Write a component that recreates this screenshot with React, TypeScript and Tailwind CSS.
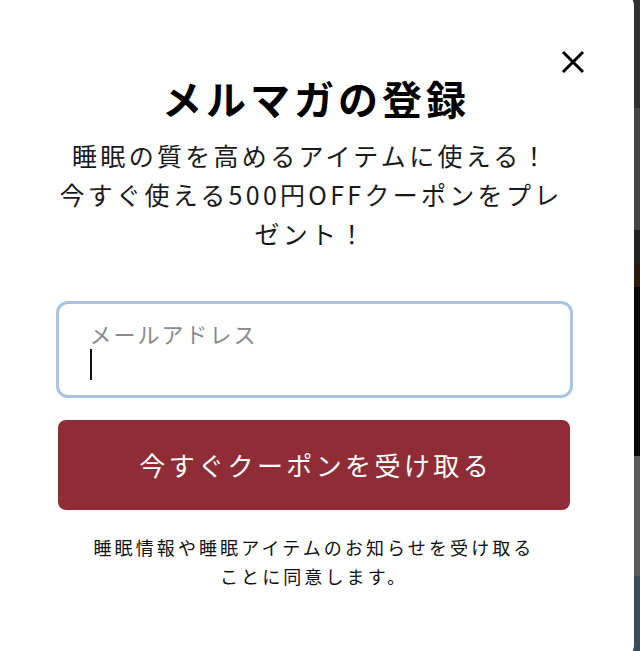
import React from "react";

const bands: { h: number; c: string }[] = [
  { h: 108, c: "bg-[#303030]" },
  { h: 122, c: "bg-[#444444]" },
  { h: 34, c: "bg-[#222222]" },
  { h: 23, c: "bg-[#2a1a10]" },
  { h: 169, c: "bg-[#080808]" },
  { h: 120, c: "bg-[#5b5b5b]" },
  { h: 75, c: "bg-[#3b4a55]" },
];

export default function App() {
  return (
    <div
      className="relative w-[640px] h-[651px] overflow-hidden"
      style={{ fontFamily: '"Noto Sans CJK JP", "Noto Sans", sans-serif' }}
    >
      {/* background photo behind the modal */}
      <div className="flex flex-col w-full h-full">
        {bands.map((b, i) => (
          <div key={i} className={`w-full ${b.c}`} style={{ height: b.h }} />
        ))}
      </div>

      {/* modal panel */}
      <div className="absolute left-0 top-[-8px] bottom-[-8px] w-[634px] bg-white rounded-r-[14px]">
        <button className="absolute left-[561px] top-[58px] w-[24px] h-[24px] flex items-center justify-center">
          <svg width="24" height="24" viewBox="0 0 24 24">
            <path d="M2 2 L22 22 M22 2 L2 22" stroke="#000" strokeWidth="3" strokeLinecap="butt" />
          </svg>
        </button>

        <div className="flex flex-col items-center pl-[58px] pr-[64px] pt-[82px]">
          <h2 className="text-[40px] leading-[48px] font-bold tracking-[0.1em] text-black whitespace-nowrap pl-[0.1em]">
            メルマガの登録
          </h2>
          <p className="mt-[14px] mr-[6px] text-[25px] leading-[39px] tracking-[3.3px] text-[#1a1a1a] text-center whitespace-nowrap">
            睡眠の質を高めるアイテムに使える！
            <br />
            今すぐ使える500円OFFクーポンをプレ
            <br />
            ゼント！
          </p>

          <div className="mt-[48px] w-[517px] h-[97px] border-[3px] border-[#a9c4de] rounded-[12px] pl-[31px] pt-[14px] flex flex-col">
            <span className="text-[22px] leading-[30px] tracking-[2px] text-[#8a8a8a] whitespace-nowrap">
              メールアドレス
            </span>
            <div className="mt-[1px] w-[2px] h-[31px] bg-[#111]" />
          </div>

          <button className="mt-[22px] w-[512px] h-[90px] bg-[#8f2d37] rounded-[8px] flex items-center justify-center">
            <span className="text-[26px] leading-[34px] tracking-[3.4px] text-white whitespace-nowrap pl-[3.4px]">
              今すぐクーポンを受け取る
            </span>
          </button>

          <p className="mt-[23px] text-[18px] leading-[29px] tracking-[3.1px] text-[#111] text-center whitespace-nowrap">
            睡眠情報や睡眠アイテムのお知らせを受け取る
            <br />
            ことに同意します。
          </p>
        </div>
      </div>
    </div>
  );
}
